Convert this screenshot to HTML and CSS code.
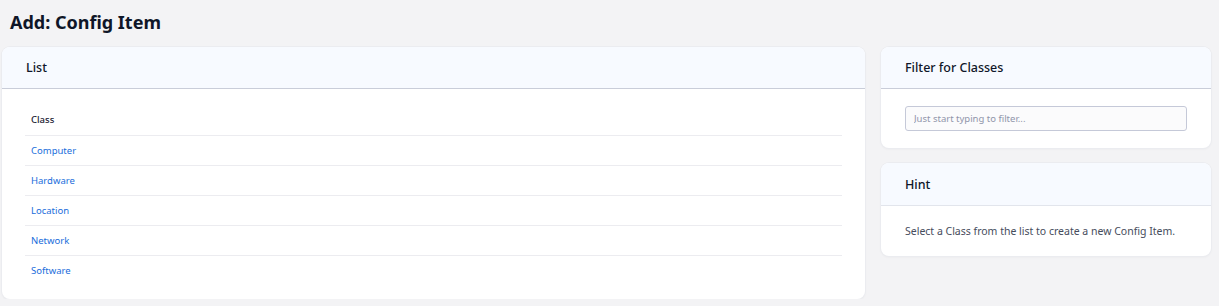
FILE: index.html
```html
<!DOCTYPE html>
<html>
<head>
<meta charset="utf-8">
<link rel="stylesheet" href="styles.css">
</head>
<body>
<h1 class="page-title">Add: Config Item</h1>
<div class="layout">
  <section class="card main-card">
    <div class="card-header">List</div>
    <div class="card-body list-body">
      <table class="class-table">
        <thead><tr><th>Class</th></tr></thead>
        <tbody>
          <tr><td><a href="#">Computer</a></td></tr>
          <tr><td><a href="#">Hardware</a></td></tr>
          <tr><td><a href="#">Location</a></td></tr>
          <tr><td><a href="#">Network</a></td></tr>
          <tr><td><a href="#">Software</a></td></tr>
        </tbody>
      </table>
    </div>
  </section>
  <aside class="sidebar">
    <section class="card">
      <div class="card-header">Filter for Classes</div>
      <div class="card-body filter-body">
        <input class="filter-input" type="text" placeholder="Just start typing to filter...">
      </div>
    </section>
    <section class="card">
      <div class="card-header hint-header">Hint</div>
      <div class="card-body hint-body">Select a Class from the list to create a new Config Item.</div>
    </section>
  </aside>
</div>
</body>
</html>
```
FILE: styles.css
```css
html, body {
  margin: 0;
  padding: 0;
  background: #f3f3f5;
  font-family: "Noto Sans", "Open Sans", sans-serif;
  color: #1c2233;
}
body {
  padding: 0 8px 0 2px;
}
.page-title {
  margin: 0;
  padding: 10px 0 0 8px;
  height: 47px;
  box-sizing: border-box;
  font-size: 18px;
  line-height: 24px;
  font-weight: 700;
  color: #0f1628;
}
.layout {
  display: flex;
  gap: 16px;
  align-items: flex-start;
}
.card {
  background: #ffffff;
  border-radius: 8px;
  box-shadow: 0 0 0 1px #ebecf0, 0 1px 3px rgba(0,0,0,0.05);
  overflow: hidden;
}
.main-card {
  flex: 0 0 863px;
}
.sidebar {
  flex: 0 0 330px;
  display: flex;
  flex-direction: column;
  gap: 15px;
}
.card-header {
  background: #f7faff;
  height: 42px;
  box-sizing: border-box;
  border-bottom: 1px solid #c9cdd9;
  padding: 0 24px;
  display: flex;
  align-items: center;
  font-size: 12.5px;
  font-weight: 500;
  color: #0f1628;
}
.hint-header {
  height: 43px;
  border-bottom-color: #e2e5ec;
}
.list-body {
  padding: 16px 23px 14px 23px;
}
.class-table {
  width: 100%;
  border-collapse: collapse;
  font-size: 9.5px;
}
.class-table th,
.class-table td {
  text-align: left;
  height: 30px;
  padding: 0 6px;
  box-sizing: border-box;
}
.class-table th {
  font-weight: 500;
  color: #1c2233;
  border-bottom: 1px solid #ececf0;
}
.class-table tbody tr + tr td {
  border-top: 1px solid #ececf0;
}
.class-table a {
  color: #1a6ddb;
  text-decoration: none;
}
.filter-body {
  padding: 17px 24px 17px 24px;
}
.filter-input {
  display: block;
  width: 100%;
  height: 25px;
  box-sizing: border-box;
  border: 1px solid #c5c9d8;
  border-radius: 3px;
  background: #fbfbfc;
  padding: 0 8px;
  font-family: inherit;
  font-size: 9.5px;
  color: #1c2233;
}
.filter-input::placeholder {
  color: #9095aa;
}
.hint-body {
  padding: 17px 24px 16px 24px;
  font-size: 10.5px;
  line-height: 17px;
  color: #464c5c;
}
```
